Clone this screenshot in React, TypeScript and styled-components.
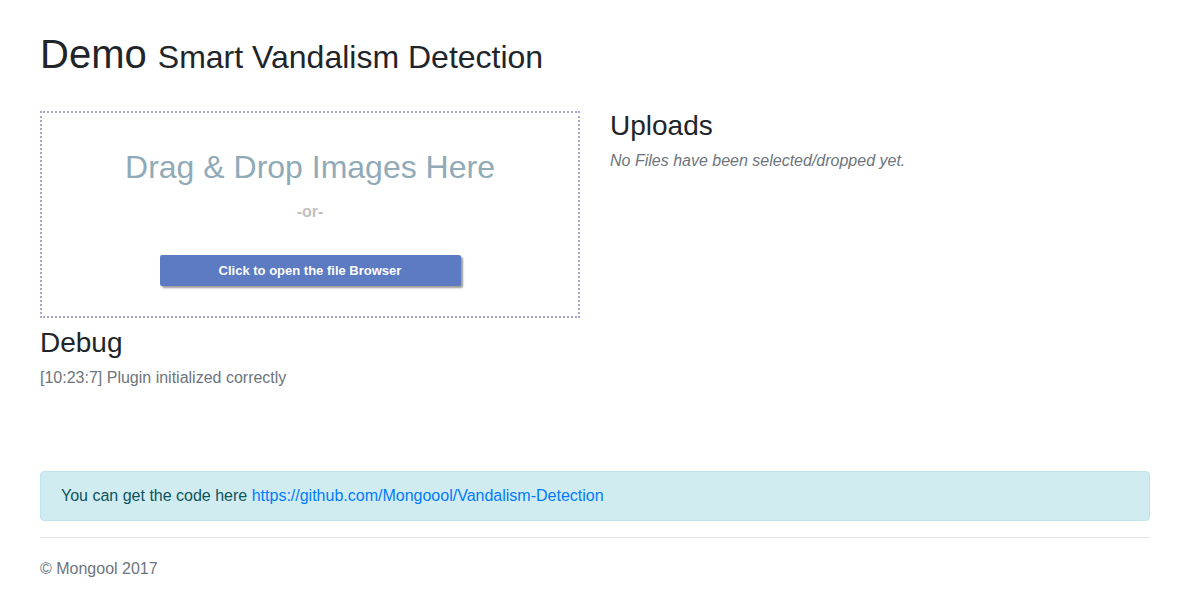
import React from "react";
import styled, { createGlobalStyle } from "styled-components";

const Global = createGlobalStyle`
  html, body { margin: 0; padding: 0; background: #fff; }
  body {
    font-family: "Liberation Sans", Arial, sans-serif;
    font-size: 16px;
    line-height: 1.5;
    color: #212529;
  }
  * { box-sizing: border-box; }
`;

const Container = styled.div`
  width: 1110px;
  margin-left: 40px;
  padding-top: 30px;
`;

const Title = styled.h1`
  margin: 0 0 30px;
  font-size: 40px;
  font-weight: 400;
  line-height: 48px;
  color: #212529;
`;

const Subtitle = styled.small`
  font-size: 32px;
`;

const Row = styled.div`
  display: grid;
  grid-template-columns: 540px 540px;
  column-gap: 30px;
`;

const Column = styled.div`
  display: flex;
  flex-direction: column;
`;

const DropZone = styled.div`
  height: 207px;
  border: 2px dotted #a7a5cc;
  display: flex;
  flex-direction: column;
  align-items: center;
  padding-top: 32px;
`;

const DropTitle = styled.div`
  font-size: 32px;
  line-height: 44px;
  color: #90aab7;
`;

const Or = styled.div`
  margin-top: 12px;
  font-size: 16px;
  font-weight: 700;
  color: #c1c1c1;
  line-height: 22px;
`;

const BrowseButton = styled.button`
  margin-top: 32px;
  width: 301px;
  height: 31px;
  border: none;
  border-radius: 2px;
  background: #5c7bc2;
  color: #fff;
  font-family: "Liberation Sans", Arial, sans-serif;
  font-weight: 700;
  font-size: 13px;
  box-shadow: 2px 2px 2px #9a9a9a;
  cursor: pointer;
`;

const SectionTitle = styled.h3`
  margin: 0;
  font-size: 28px;
  font-weight: 400;
  line-height: 1.2;
  color: #212529;
`;

const UploadsTitle = styled(SectionTitle)`
  margin-top: -2px;
  margin-bottom: 6px;
`;

const DebugTitle = styled(SectionTitle)`
  margin-top: 8px;
  margin-bottom: 6px;
`;

const EmptyNote = styled.em`
  color: #6c757d;
  font-size: 16px;
`;

const DebugLine = styled.div`
  color: #6c757d;
  font-size: 16px;
`;

const Alert = styled.div`
  margin-top: 81px;
  padding: 12px 20px;
  border: 1px solid #bee5eb;
  border-radius: 4px;
  background: #d1ecf1;
  color: #0c5460;
  font-size: 16px;
`;

const Link = styled.a`
  color: #007bff;
  text-decoration: none;
`;

const Rule = styled.hr`
  margin: 16px 0 0;
  border: 0;
  border-top: 1px solid #e5e5e5;
`;

const Footer = styled.footer`
  padding-top: 19px;
  color: #6c757d;
  font-size: 16px;
`;

export default function App() {
  return (
    <>
      <Global />
      <Container>
        <Title>
          Demo <Subtitle>Smart Vandalism Detection</Subtitle>
        </Title>
        <Row>
          <Column>
            <DropZone>
              <DropTitle>Drag &amp; Drop Images Here</DropTitle>
              <Or>-or-</Or>
              <BrowseButton>Click to open the file Browser</BrowseButton>
            </DropZone>
            <DebugTitle>Debug</DebugTitle>
            <DebugLine>[10:23:7] Plugin initialized correctly</DebugLine>
          </Column>
          <Column>
            <UploadsTitle>Uploads</UploadsTitle>
            <EmptyNote>No Files have been selected/dropped yet.</EmptyNote>
          </Column>
        </Row>
        <Alert>
          You can get the code here{" "}
          <Link href="#">https://github.com/Mongoool/Vandalism-Detection</Link>
        </Alert>
        <Rule />
        <Footer>© Mongool 2017</Footer>
      </Container>
    </>
  );
}
